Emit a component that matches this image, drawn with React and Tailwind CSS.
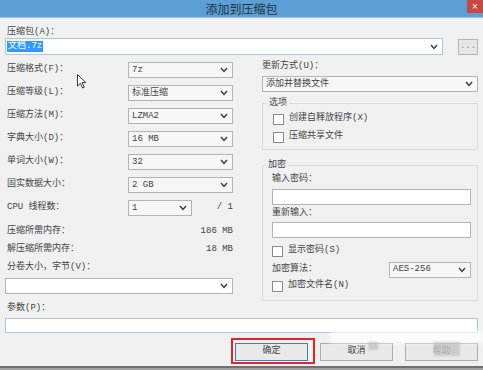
import React from 'react';

// small chevron used by all the drop-down boxes
const Chevron = () => (
  <svg width="8" height="6" viewBox="0 0 8 6" className="shrink-0">
    <polyline points="1,1 4,4.5 7,1" fill="none" stroke="#3a3a3a" strokeWidth="1.4" />
  </svg>
);

const Select = ({ value, className = '', white = false }) => (
  <div
    className={`flex items-center justify-between h-[16px] border border-[#b4b4b4] pl-[3px] pr-[4px] ${
      white ? 'bg-white' : 'bg-[#f6f6f6]'
    } ${className}`}
  >
    <span className="leading-none">{value}</span>
    <Chevron />
  </div>
);

const Checkbox = ({ label }) => (
  <div className="flex items-center gap-[5px] h-[12px]">
    <div className="w-[11px] h-[11px] border border-[#8a8a8a] bg-white" />
    <span>{label}</span>
  </div>
);

const Field = ({ label, value, narrow, extra }) => (
  <div className="flex items-start h-[23px]">
    <div className="w-[123px] pl-[2px] h-[16px] flex items-center">{label}</div>
    <Select value={value} className={narrow ? 'w-[64px]' : 'w-[105px]'} />
    {extra && <div className="flex-1 h-[16px] flex items-center justify-end">{extra}</div>}
  </div>
);

const Legend = ({ children }) => (
  <legend className="ml-[-6px] px-[2px] leading-[11px]">{children}</legend>
);

const Button = ({ children, primary, faded }) => (
  <div
    className={`w-[73px] h-[18px] flex items-center justify-center border bg-[#e9e9e9] ${
      primary ? 'border-[#3c7fb1]' : 'border-[#adadad]'
    } ${faded ? 'text-[#9a9a9a]' : ''}`}
  >
    {children}
  </div>
);

const Cursor = () => (
  <svg width="10" height="15" viewBox="0 0 10 15" className="absolute left-[77px] top-[74px]">
    <path d="M0.5,0.5 L0.5,12 L3.3,9.3 L5.6,14 L7.3,13.2 L5,8.6 L8.8,8.6 Z" fill="#fff" stroke="#222" strokeWidth="0.9" />
  </svg>
);

export default function App() {
  return (
    <div className="w-[483px] h-[370px] bg-[#f0f0f0] flex flex-col overflow-hidden relative text-[9px] text-[#444] font-['Liberation_Mono','Noto_Sans_CJK_SC',monospace]">
      {/* title bar */}
      <div className="h-[18px] shrink-0 bg-[#5c9fd5] border-b border-[#9cc3e4] flex items-center justify-center relative">
        <span className="text-[12px] text-[#24323f] font-['Noto_Sans_CJK_SC',sans-serif]">添加到压缩包</span>
        <div className="absolute right-0 top-0 w-[16px] h-[13px] bg-[#c9483f] flex items-center justify-center text-white text-[10px] leading-none font-['Liberation_Sans',sans-serif]">
          ×
        </div>
      </div>

      <div className="px-[5px] pt-[9px]">
        <div className="h-[11px] leading-[11px] pl-[2px]">压缩包(A)：</div>
        <div className="flex items-center gap-[15px]">
          <div className="flex-1 h-[17px] bg-white border border-[#a9c6e3] flex items-center justify-between pl-[1px] pr-[4px]">
            <span className="bg-[#3399ff] text-white px-[1px] leading-[11px]">文档.7z</span>
            <Chevron />
          </div>
          <div className="w-[20px] h-[16px] border border-[#b4b4b4] bg-[#e6e6e6] flex items-center justify-center text-[#888] leading-none">
            ...
          </div>
        </div>

        <div className="grid grid-cols-[228px_216px] gap-x-[29px] mt-[6px]">
          {/* left column */}
          <div className="flex flex-col pt-[1px]">
            <Field label="压缩格式(F)：" value="7z" />
            <Field label="压缩等级(L)：" value="标准压缩" />
            <Field label="压缩方法(M)：" value="LZMA2" />
            <Field label="字典大小(D)：" value="16 MB" />
            <Field label="单词大小(W)：" value="32" />
            <Field label="固实数据大小：" value="2 GB" />
            <Field label="CPU 线程数：" value="1" narrow extra="/ 1" />
            <div className="h-[18px] flex items-center justify-between pl-[2px]">
              <span>压缩所需内存：</span>
              <span>186 MB</span>
            </div>
            <div className="h-[18px] flex items-center justify-between pl-[2px]">
              <span>解压缩所需内存：</span>
              <span>18 MB</span>
            </div>
            <div className="h-[18px] flex items-center pl-[2px]">分卷大小，字节(V)：</div>
            <Select value="" white className="mt-[1px]" />
          </div>

          {/* right column */}
          <div className="flex flex-col">
            <div className="h-[11px] leading-[11px]">更新方式(U)：</div>
            <Select value="添加并替换文件" className="mt-[4px] h-[15px]" />

            <fieldset className="mt-[6px] border border-[#d8dde2] pl-[10px] pr-[6px] pb-[3px]">
              <Legend>选项</Legend>
              <div className="h-[18px] flex items-center mt-[1px]">
                <Checkbox label="创建自释放程序(X)" />
              </div>
              <div className="h-[18px] flex items-center">
                <Checkbox label="压缩共享文件" />
              </div>
            </fieldset>

            <fieldset className="mt-[10px] border border-[#d8dde2] pl-[9px] pr-[6px] pb-[8px]">
              <Legend>加密</Legend>
              <div className="h-[18px] flex items-center">输入密码：</div>
              <div className="h-[16px] bg-white border border-[#b4b4b4]" />
              <div className="h-[17px] flex items-center">重新输入：</div>
              <div className="h-[16px] bg-white border border-[#b4b4b4]" />
              <div className="mt-[7px]">
                <Checkbox label="显示密码(S)" />
              </div>
              <div className="mt-[5px] h-[15px] flex items-center justify-between">
                <span>加密算法：</span>
                <Select value="AES-256" className="w-[82px] h-[15px]" />
              </div>
              <div className="mt-[3px]">
                <Checkbox label="加密文件名(N)" />
              </div>
            </fieldset>
          </div>
        </div>

        <div className="mt-[1px] h-[12px] leading-[12px] pl-[2px]">参数(P)：</div>
        <div className="mt-[4px] h-[15px] bg-white border border-[#a9c6e3]" />

        <div className="mt-[10px] flex justify-end gap-[12px]">
          <div className="relative">
            <Button primary>确定</Button>
            <div className="absolute left-[-4px] top-[-5px] w-[84px] h-[26px] border-2 border-[#e0262b]" />
          </div>
          <Button>取消</Button>
          <Button faded>帮助</Button>
        </div>
      </div>

      <div className="flex-1" />
      <div className="h-[4px] shrink-0 bg-[#a0a0a0] border-t-2 border-[#707070]" />

      {/* watermark smudges */}
      <div className="absolute left-[330px] top-[331px] w-[153px] h-[12px] bg-white/80 blur-[2px]" />
      <div className="absolute left-[368px] top-[342px] w-[10px] h-[8px] bg-[#bcbcbc]/70 blur-[1px]" />
      <div className="absolute left-[434px] top-[342px] w-[26px] h-[14px] bg-[#b8b8b8]/60 blur-[1px]" />

      <Cursor />
    </div>
  );
}
